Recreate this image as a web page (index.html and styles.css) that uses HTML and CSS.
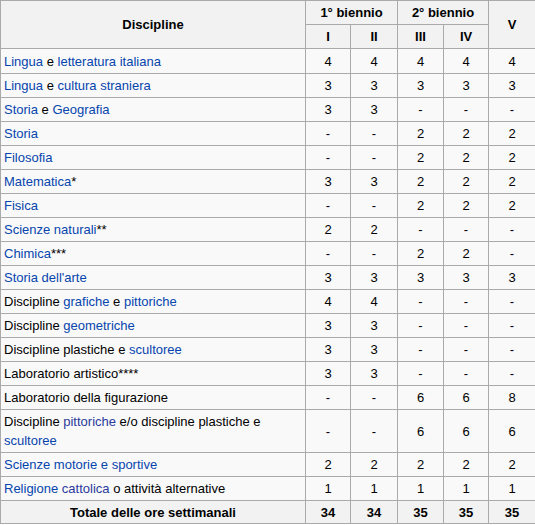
FILE: index.html
```html
<!DOCTYPE html>
<html lang="it">
<head>
<meta charset="utf-8">
<title>Quadro orario</title>
<link rel="stylesheet" href="styles.css">
</head>
<body>
<table class="wikitable">
  <colgroup>
    <col class="c-name">
    <col class="c-1">
    <col class="c-2">
    <col class="c-3">
    <col class="c-4">
    <col class="c-5">
  </colgroup>
  <thead>
    <tr>
      <th rowspan="2">Discipline</th>
      <th colspan="2">1° biennio</th>
      <th colspan="2">2° biennio</th>
      <th rowspan="2">V</th>
    </tr>
    <tr>
      <th>I</th><th>II</th><th>III</th><th>IV</th>
    </tr>
  </thead>
  <tbody>
    <tr class="first"><td><a href="#">Lingua</a> e <a href="#">letteratura italiana</a></td><td>4</td><td>4</td><td>4</td><td>4</td><td>4</td></tr>
    <tr><td><a href="#">Lingua</a> e <a href="#">cultura straniera</a></td><td>3</td><td>3</td><td>3</td><td>3</td><td>3</td></tr>
    <tr><td><a href="#">Storia</a> e <a href="#">Geografia</a></td><td>3</td><td>3</td><td>-</td><td>-</td><td>-</td></tr>
    <tr><td><a href="#">Storia</a></td><td>-</td><td>-</td><td>2</td><td>2</td><td>2</td></tr>
    <tr><td><a href="#">Filosofia</a></td><td>-</td><td>-</td><td>2</td><td>2</td><td>2</td></tr>
    <tr><td><a href="#">Matematica</a>*</td><td>3</td><td>3</td><td>2</td><td>2</td><td>2</td></tr>
    <tr><td><a href="#">Fisica</a></td><td>-</td><td>-</td><td>2</td><td>2</td><td>2</td></tr>
    <tr><td><a href="#">Scienze naturali</a>**</td><td>2</td><td>2</td><td>-</td><td>-</td><td>-</td></tr>
    <tr><td><a href="#">Chimica</a>***</td><td>-</td><td>-</td><td>2</td><td>2</td><td>-</td></tr>
    <tr><td><a href="#">Storia dell'arte</a></td><td>3</td><td>3</td><td>3</td><td>3</td><td>3</td></tr>
    <tr><td>Discipline <a href="#">grafiche</a> e <a href="#">pittoriche</a></td><td>4</td><td>4</td><td>-</td><td>-</td><td>-</td></tr>
    <tr><td>Discipline <a href="#">geometriche</a></td><td>3</td><td>3</td><td>-</td><td>-</td><td>-</td></tr>
    <tr><td>Discipline plastiche e <a href="#">scultoree</a></td><td>3</td><td>3</td><td>-</td><td>-</td><td>-</td></tr>
    <tr><td>Laboratorio artistico****</td><td>3</td><td>3</td><td>-</td><td>-</td><td>-</td></tr>
    <tr><td>Laboratorio della figurazione</td><td>-</td><td>-</td><td>6</td><td>6</td><td>8</td></tr>
    <tr><td>Discipline <a href="#" class="visited">pittoriche</a> e/o discipline plastiche e <a href="#">scultoree</a></td><td>-</td><td>-</td><td>6</td><td>6</td><td>6</td></tr>
    <tr><td><a href="#">Scienze motorie e sportive</a></td><td>2</td><td>2</td><td>2</td><td>2</td><td>2</td></tr>
    <tr><td><a href="#">Religione</a> <a href="#" class="visited">cattolica</a> o attività alternative</td><td>1</td><td>1</td><td>1</td><td>1</td><td>1</td></tr>
  </tbody>
  <tfoot>
    <tr><th>Totale delle ore settimanali</th><th>34</th><th>34</th><th>35</th><th>35</th><th>35</th></tr>
  </tfoot>
</table>
</body>
</html>
```
FILE: styles.css
```css
html, body {
  margin: 0;
  padding: 0;
  background: #ffffff;
}

.wikitable {
  width: 535px;
  table-layout: fixed;
  border-collapse: collapse;
  border: 1px solid #aaaaaa;
  background: #f9f9f9;
  color: #000000;
  font-family: "Liberation Sans", Arial, sans-serif;
  font-size: 13px;
  line-height: 19px;
}

.c-name { width: 305px; }
.c-1 { width: 45px; }
.c-2 { width: 47px; }
.c-3 { width: 46px; }
.c-4 { width: 45px; }
.c-5 { width: 47px; }

.wikitable th,
.wikitable td {
  border: 1px solid #aaaaaa;
  padding: 2px 3px;
  vertical-align: middle;
}

.wikitable tr.first td {
  padding-top: 3px;
}

.wikitable tfoot th {
  padding-bottom: 1px;
}

.wikitable th {
  background: #f2f2f2;
  font-weight: bold;
  text-align: center;
}

.wikitable td {
  text-align: center;
}

.wikitable td:first-child {
  text-align: left;
}

.wikitable a {
  color: #0645ad;
  text-decoration: none;
}

.wikitable a.visited {
  color: #2a3a9c;
}
```
